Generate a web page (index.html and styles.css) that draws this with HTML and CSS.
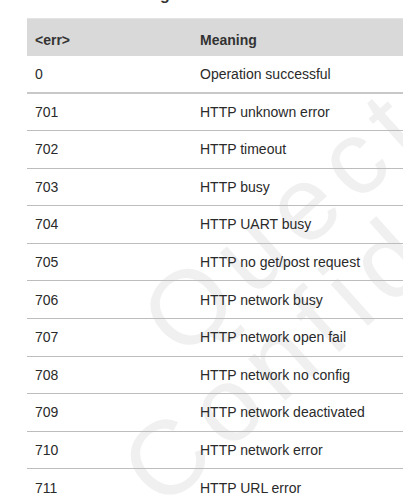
FILE: index.html
```html
<!DOCTYPE html>
<html lang="en">
<head>
    <meta charset="UTF-8">
    <meta name="viewport" content="width=device-width, initial-scale=1.0">
    <title>Error Codes</title>
    <link rel="stylesheet" href="styles.css">
</head>
<body>
    <div class="page">
        <div class="caption-wrap">
            <p class="caption">Meaning of Error Codes</p>
        </div>
        <div class="watermark">
            <span class="wm-line wm-top">Quectel</span>
            <span class="wm-line wm-bottom">Confidential</span>
        </div>
        <div class="codes">
            <div class="row head">
                <div class="code">&lt;err&gt;</div>
                <div class="meaning">Meaning</div>
            </div>
            <div class="row first">
                <div class="code">0</div>
                <div class="meaning">Operation successful</div>
            </div>
            <div class="row"><div class="code">701</div><div class="meaning">HTTP unknown error</div></div>
            <div class="row"><div class="code">702</div><div class="meaning">HTTP timeout</div></div>
            <div class="row"><div class="code">703</div><div class="meaning">HTTP busy</div></div>
            <div class="row"><div class="code">704</div><div class="meaning">HTTP UART busy</div></div>
            <div class="row"><div class="code">705</div><div class="meaning">HTTP no get/post request</div></div>
            <div class="row"><div class="code">706</div><div class="meaning">HTTP network busy</div></div>
            <div class="row"><div class="code">707</div><div class="meaning">HTTP network open fail</div></div>
            <div class="row"><div class="code">708</div><div class="meaning">HTTP network no config</div></div>
            <div class="row"><div class="code">709</div><div class="meaning">HTTP network deactivated</div></div>
            <div class="row"><div class="code">710</div><div class="meaning">HTTP network error</div></div>
            <div class="row"><div class="code">711</div><div class="meaning">HTTP URL error</div></div>
        </div>
    </div>
</body>
</html>
```

FILE: styles.css
```css
body {
    margin: 0;
    padding: 0;
    background-color: #ffffff;
    font-family: "Liberation Sans", Arial, sans-serif;
    color: #2a2a2a;
    overflow: hidden;
}
.page {
    position: relative;
    height: 500px;
    overflow: hidden;
}
/* only the descenders of the caption show above the table */
.caption-wrap {
    height: 18px;
    overflow: hidden;
}
.caption {
    margin: -14px 0 0 0;
    padding-right: 12px;
    line-height: 18px;
    font-size: 16px;
    font-weight: bold;
    text-align: center;
    color: #333;
}
.codes {
    position: relative;
    z-index: 1;
    margin-left: 27px;
}
.row {
    display: flex;
    align-items: center;
    box-sizing: border-box;
    height: 37.6px;
    border-bottom: 1px solid #bdbdbd;
    font-size: 14px;
}
.row .code {
    width: 165px;
    padding-left: 8px;
}
.row .meaning {
    flex: 1;
}
.row.head {
    height: 38px;
    padding-top: 5px;
    background-color: #d9d9d9;
    border-top: 1px solid #e4e4e4;
    border-bottom: none;
    font-weight: bold;
    color: #333;
}
.row.first {
    height: 38px;
    border-bottom: 2px solid #c8c8c8;
}
.row.first + .row {
    height: 37px;
}
.watermark {
    position: absolute;
    left: 0;
    top: 0;
    width: 403px;
    height: 500px;
    z-index: 0;
}
.wm-line {
    position: absolute;
    font-size: 105px;
    line-height: 1;
    letter-spacing: 12px;
    color: #f0f0f0;
    white-space: nowrap;
    transform: rotate(-42deg);
    transform-origin: left bottom;
}
.wm-top {
    left: 193px;
    top: 268px;
}
.wm-bottom {
    left: 173px;
    top: 418px;
}
```
